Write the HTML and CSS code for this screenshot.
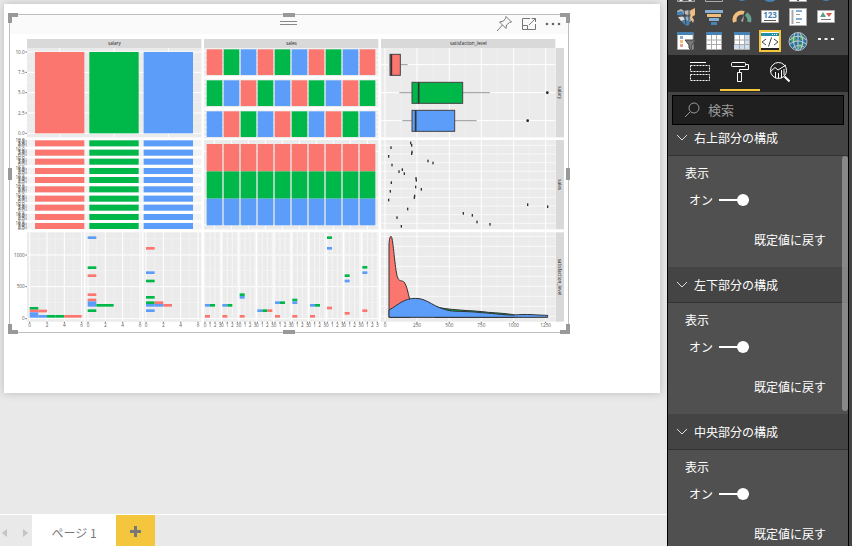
FILE: index.html
```
<!DOCTYPE html>
<html lang="ja">
<head>
<meta charset="utf-8">
<title>レポート</title>
<link rel="stylesheet" href="styles.css">
</head>
<body>
<main class="stage">
  <div class="canvas">
    <section class="page">
      <div class="visual">
        <header class="visual-header">
          <span class="grip"></span>
          <button class="icon-btn" aria-label="ピン留め"><svg width="17" height="17" viewBox="0 0 17 17"><path d="M10 1.500L15.500 7L13.500 7.500L10.500 10L10 13.500L3.500 7L7.500 6L9.500 3.500Z M6.500 10L1 16"/></svg></button>
          <button class="icon-btn" aria-label="フォーカス モード"><svg width="16" height="14" viewBox="0 0 16 14"><path d="M9 1.500H1.500V12.500H14.500V7M1.500 8.500H6.500V12.500M8 8L14.500 1.500M10.500 1.500H14.500V5"/></svg></button>
          <button class="icon-btn" aria-label="その他のオプション"><svg class="dots" width="17" height="4" viewBox="0 0 17 4"><circle cx="2" cy="2" r="1.300"/><circle cx="8" cy="2" r="1.300"/><circle cx="14" cy="2" r="1.300"/></svg></button>
        </header>
        <svg class="chart" id="chart" viewBox="30 102 1674 894" role="img" aria-label="salary sales satisfaction_level"></svg>
        <span class="handle corner tl"></span><span class="handle corner tr"></span>
        <span class="handle corner bl"></span><span class="handle corner br"></span>
        <span class="handle wide top"></span><span class="handle wide bottom"></span>
        <span class="handle tall left"></span><span class="handle tall right"></span>
      </div>
    </section>
  </div>
  <nav class="tabs">
    <button class="arrow" aria-label="前のページ"><svg width="6" height="10" viewBox="0 0 6 10"><path d="M5 1V9L0 5Z"/></svg></button>
    <button class="arrow" aria-label="次のページ"><svg width="6" height="10" viewBox="0 0 6 10"><path d="M1 1V9L6 5Z"/></svg></button>
    <button class="tab">ページ 1</button>
    <button class="add" aria-label="新しいページ"><svg width="11" height="11" viewBox="0 0 11 11"><path d="M4 0H7V4H11V7H7V11H4V7H0V4H4Z"/></svg></button>
  </nav>
</main>
<aside class="pane">
  <div class="gallery-clip">
  <div class="gallery">
    <button aria-label="積み上げ"><svg viewBox="0 0 20 20"><path d="M1.500 1H18.500V18.500H1.500Z" fill="#555" stroke="#aaa"/><path d="M5 18V14M14 18V14" stroke="#eee" stroke-width="3"/></svg></button>
    <button aria-label="滝"><svg viewBox="0 0 20 20"><path d="M1.500 1H18.500V18.500H1.500Z" fill="#444" stroke="#aaa"/></svg></button>
    <button aria-label="円"><svg viewBox="0 0 20 20"><circle cx="10" cy="12" r="6" fill="#4682b4"/></svg></button>
    <button aria-label="ドーナツ"><svg viewBox="0 0 20 20"><circle cx="10" cy="10" r="9" fill="#4682b4"/></svg></button>
    <button aria-label="ツリーマップ"><svg viewBox="0 0 20 20"><path d="M1.500 1H18.500V18.500H1.500Z" fill="#fff" stroke="#aaa"/><path d="M10 1V18" stroke="#555" stroke-width="2"/></svg></button>
    <button aria-label="マップ"><svg viewBox="0 0 20 20"><circle cx="10" cy="11" r="7" fill="#4682b4"/></svg></button>

    <button aria-label="塗り分け地図"><svg viewBox="0 0 20 20"><path d="M1 4L5 2L8 4L13 3L16 4V7L12 8L8 7L2 8Z" fill="#bbb"/><path d="M1 5L6 4L8 8L4 9L1 8Z" fill="#4682b4"/><path d="M2 10L7 9L9 13L5 14Z" fill="#ddd"/><path d="M8 9L13 8L17 12L14 15L9 13Z" fill="#87aed0"/><path d="M5 14L10 13L14 16L12 19L8 17Z" fill="#4682b4"/><path d="M15 3L19 1V8L16 10L18 13L17 16L14 11Z" fill="#f0bd7c"/><path d="M1 9H14M8 4L10 17M13 3V14" stroke="#444" fill="none"/></svg></button>
    <button aria-label="じょうご"><svg viewBox="0 0 20 20"><path d="M1 3H19V6H1Z M5 11H15V14H5Z" fill="#87aed0"/><path d="M3 7H17V10H3Z" fill="#f0bd7c"/><path d="M7 15H13V18H7Z" fill="#4682b4"/></svg></button>
    <button aria-label="ゲージ"><svg viewBox="0 0 20 20"><path d="M3 15A7 7 0 0 1 12 6" fill="none" stroke="#f0bd7c" stroke-width="4"/><path d="M14 7A7 7 0 0 1 17 15" fill="none" stroke="#67a28f" stroke-width="4"/><path d="M12 8L11 15L9 14Z" fill="#aaa"/></svg></button>
    <button aria-label="カード"><svg viewBox="0 0 20 20"><path d="M1.500 3.500H18.500V15.500H1.500Z" fill="#fff" stroke="#aaa"/><text x="10" y="11" text-anchor="middle" class="num">123</text><path d="M4 13.500H16" stroke="#555"/></svg></button>
    <button aria-label="複数行カード"><svg viewBox="0 0 20 20"><path d="M1.500 1.500H18.500V18.500H1.500Z" fill="#fff" stroke="#aaa"/><path d="M4.500 3V17" stroke="#aaa" stroke-width="2"/><path d="M8 4H14M8 12H14" stroke="#87aed0" stroke-width="2"/><path d="M8 7.500H12M8 15.500H12" stroke="#999"/></svg></button>
    <button aria-label="KPI"><svg viewBox="0 0 20 20"><path d="M1.500 3.500H18.500V15.500H1.500Z" fill="#fff" stroke="#aaa"/><path d="M4 10L7 5L10 10Z" fill="#5b9d87"/><path d="M10 6H16L13 10Z" fill="#d65f43"/><path d="M5 12.500H15" stroke="#777"/></svg></button>

    <button aria-label="スライサー"><svg viewBox="0 0 20 20"><path d="M1.500 1.500H17V18.500H1.500Z" fill="#fff" stroke="#aaa"/><path d="M1 1H17V4H1Z" fill="#4682b4"/><path d="M4 5H7V8H4Z" fill="#87aed0"/><path d="M4 9H7V12H4Z" fill="#f0bd7c"/><path d="M4 13H7V16H4Z" fill="#e9a18f"/><path d="M9 9H20L16 14V20L13 17V14Z" fill="#777" stroke="#444"/></svg></button>
    <button aria-label="テーブル"><svg viewBox="0 0 20 20"><path d="M2.500 1.500H17.500V18.500H2.500Z" fill="#fff" stroke="#aaa"/><path d="M2 1H18V4H2Z" fill="#4682b4"/><path d="M7.500 4V18M12.500 4V18M2 9H18M2 13.500H18" stroke="#aaa"/></svg></button>
    <button aria-label="マトリックス"><svg viewBox="0 0 20 20"><path d="M2.500 1.500H17.500V18.500H2.500Z" fill="#fff" stroke="#aaa"/><path d="M13 4H17V18H2V14H13Z" fill="#cfdff0"/><path d="M2 1H18V4H2Z" fill="#4682b4"/><path d="M7.500 4V18M12.500 4V18M2 9H18M2 13.500H18" stroke="#aaa"/></svg></button>
    <button class="selected" aria-label="R スクリプト ビジュアル"><svg viewBox="0 0 20 20"><path d="M0 0H20V20H0Z" fill="#fff"/><path d="M1 2H19V5H1Z" fill="#258ea8"/><path d="M12 3.500H18" stroke="#fff" stroke-dasharray="1 1"/><path d="M6 8L2 11L6 14M14 8L18 11L14 14M11.500 6.500L8.500 15.500" fill="none" stroke="#444"/><path d="M1 17H19V19H1Z" fill="#222"/></svg></button>
    <button aria-label="ArcGIS マップ"><svg viewBox="0 0 20 20"><circle cx="10" cy="10.500" r="9" fill="#2674a5" stroke="#bbb"/><path d="M3 6L7 5L9 10L6 12L3 10Z M12 3L16 6L15 10L12 8Z M11 13L16 12L14 17L10 18Z" fill="#4aa663"/><path d="M2 9C7 4 13 4 18 9M2 13C7 9 13 9 18 13M5 17C8 14 12 14 16 16M7 2C4 9 6 16 9 19M12 2C17 9 14 16 12 19M10 2V19" fill="none" stroke="#ccc"/></svg></button>
    <button aria-label="その他"><svg viewBox="0 0 20 20"><path d="M2 7H5V9H2Z M8.500 7H11.500V9H8.500Z M15 7H18V9H15Z" fill="#eee"/></svg></button>
  </div>
  </div>
  <nav class="modes">
    <button aria-label="フィールド"><svg viewBox="0 0 20 20"><path d="M0 .5H16"/><path d="M.5 3.500H19.500V9.500H.5Z M.5 12.500H19.500V18.500H.5Z" stroke-dasharray="2 1"/></svg></button>
    <button class="active" aria-label="書式"><svg viewBox="0 0 20 20"><rect x="1.500" y=".5" width="14" height="4" rx="1"/><path d="M16 2.500H18.500V7.500H9.500V10M7.500 10.500H11.500V19.500H7.500Z"/></svg></button>
    <button aria-label="分析"><svg viewBox="0 0 20 20"><circle cx="8.500" cy="8.500" r="8"/><path d="M0 10L5 5.500L8 8L16 3M5.500 16V10M8.500 16V11M11.500 16V8M14 13V7"/><path d="M14.500 14.500L19.500 19.500" stroke-width="2"/></svg></button>
  </nav>
  <div class="search-area">
    <label class="search">
      <svg width="16" height="16" viewBox="0 0 16 16"><circle cx="10" cy="6" r="5"/><path d="M6 10L1 15"/></svg>
      <input type="search" placeholder="検索" aria-label="検索">
    </label>
  </div>
  <div class="list">
    <div class="sections">
      <section>
        <button class="heading"><svg width="12" height="8" viewBox="0 0 12 8"><path d="M1 1L6 6L11 1"/></svg>右上部分の構成</button>
        <div class="body"><label for="s1">表示</label><div class="switch"><span>オン</span><input id="s1" type="checkbox" checked></div><button class="reset">既定値に戻す</button></div>
      </section>
      <section>
        <button class="heading"><svg width="12" height="8" viewBox="0 0 12 8"><path d="M1 1L6 6L11 1"/></svg>左下部分の構成</button>
        <div class="body"><label for="s2">表示</label><div class="switch"><span>オン</span><input id="s2" type="checkbox" checked></div><button class="reset">既定値に戻す</button></div>
      </section>
      <section>
        <button class="heading"><svg width="12" height="8" viewBox="0 0 12 8"><path d="M1 1L6 6L11 1"/></svg>中央部分の構成</button>
        <div class="body"><label for="s3">表示</label><div class="switch"><span>オン</span><input id="s3" type="checkbox" checked></div><button class="reset">既定値に戻す</button></div>
      </section>
    </div>
    <span class="scrollbar"></span>
  </div>
</aside>
<script src="chart.js"></script>
</body>
</html>
```
FILE: styles.css
```
* { box-sizing: border-box; }
body {
  margin: 0;
  display: flex;
  height: 100vh;
  overflow: hidden;
  background: #444;
  font: 12px/18px "Noto Sans CJK JP", sans-serif;
}
button {
  margin: 0;
  padding: 0;
  border: 0;
  background: none;
  color: inherit;
  font: inherit;
}
svg { display: block; }

.stage {
  flex: 1;
  min-width: 0;
  display: flex;
  flex-direction: column;
  background: #e9e9e9;
}
.canvas {
  flex: 1;
  display: flex;
  padding: 4px 7px 121px 4px;
}
.page {
  flex: 1;
  padding: 10px 91px 0 5px;
  background: #fff;
  box-shadow: 0 0 8px #bbb;
}
.visual {
  position: relative;
  border: 1px solid #bfbfbf;
}
.visual-header {
  position: relative;
  display: flex;
  align-items: center;
  justify-content: flex-end;
  gap: 8px;
  height: 19px;
  padding: 0 6px 2px 0;
  background: #fafafa;
}
.icon-btn svg {
  fill: none;
  stroke: #777;
}
.icon-btn .dots {
  fill: #666;
  stroke: none;
}
.grip {
  position: absolute;
  left: 50%;
  top: 6px;
  width: 17px;
  height: 4px;
  margin-left: -9px;
  border: solid #888;
  border-width: 1px 0;
}
.chart {
  width: 100%;
  height: auto;
  font-family: "Open Sans", sans-serif;
  font-size: 14px;
}
.handle {
  position: absolute;
  border: 0 solid #999;
}
.corner { width: 10px; height: 10px; }
.tl { left: -2px; top: -2px; border-width: 4px 0 0 4px; }
.tr { right: -2px; top: -2px; border-width: 4px 4px 0 0; }
.bl { left: -2px; bottom: -2px; border-width: 0 0 4px 4px; }
.br { right: -2px; bottom: -2px; border-width: 0 4px 4px 0; }
.wide { left: 50%; width: 12px; height: 4px; margin-left: -6px; background: #999; }
.tall { top: 50%; width: 4px; height: 12px; margin-top: -6px; background: #999; }
.top { top: -2px; }
.bottom { bottom: -2px; }
.left { left: -2px; }
.right { right: -2px; }

.tabs {
  display: flex;
  height: 32px;
  border-top: 1px solid #fff;
}
.arrow {
  width: 16px;
  padding-top: 4px;
}
.arrow svg { margin: 0 auto 0 2px; fill: #c4c4c4; }
.arrow + .arrow svg { margin: 0 auto 0 6px; }
.tab {
  width: 84px;
  padding-top: 4px;
  background: #fff;
  color: #777;
}
.add {
  width: 39px;
  padding-top: 2px;
  background: #f4c63d;
}
.add svg { margin: auto; fill: #777; }

.pane {
  width: 182px;
  margin-right: 3px;
  display: flex;
  flex-direction: column;
  border: solid #000;
  border-width: 0 1px;
  background: #444;
  color: #fff;
}
.gallery-clip {
  flex: none;
  overflow: hidden;
}
.gallery {
  display: grid;
  grid-template-columns: repeat(6, 1fr);
  grid-auto-rows: 24px;
  margin-top: -19px;
  padding: 0 8px 2px 4px;
}
.gallery button {
  display: flex;
  align-items: center;
  justify-content: center;
}
.gallery svg { width: 20px; height: 20px; }
.gallery .selected svg {
  width: 22px;
  height: 22px;
  border: 1px solid #f4c63d;
  outline: 1px solid #f4c63d;
  outline-offset: -2px;
}
.num {
  font: bold 8px "Open Sans", sans-serif;
  fill: #4682b4;
}
.modes {
  display: flex;
  flex: none;
  height: 36px;
  padding-left: 12px;
  background: #222;
}
.modes button {
  width: 40px;
  border-bottom: 2px solid transparent;
}
.modes .active { border-color: #f4c63d; }
.modes svg {
  width: 20px;
  height: 20px;
  margin: auto;
  fill: none;
  stroke: #fff;
}
.search-area {
  flex: none;
  padding: 3px 4px 1px;
  border-top: 1px solid #222;
}
.search {
  display: flex;
  align-items: center;
  gap: 8px;
  height: 30px;
  padding: 0 11px;
  border: 1px solid #000;
  background: #1f1f1f;
}
.search svg { flex: none; fill: none; stroke: #999; }
.search input {
  flex: 1;
  min-width: 0;
  padding: 0;
  border: 0;
  outline: 0;
  background: none;
  color: #fff;
  font: inherit;
  font-size: 13px;
}
.search input::placeholder { color: #999; }
.list {
  position: relative;
  flex: 1;
  min-height: 0;
  overflow: hidden;
}
.sections { margin-top: -6px; }
.heading {
  display: flex;
  align-items: center;
  gap: 6px;
  width: 100%;
  height: 36px;
  padding-left: 8px;
  border-bottom: 1px solid #333;
}
.heading svg { fill: none; stroke: #ddd; }
.body {
  display: flex;
  flex-direction: column;
  padding: 8px 22px 18px 17px;
  background: #505050;
}
.switch {
  display: flex;
  align-items: center;
  gap: 6px;
  margin: 9px 0 22px 4px;
}
.switch input {
  appearance: none;
  display: flex;
  justify-content: flex-end;
  width: 30px;
  height: 12px;
  margin: 0;
  background: linear-gradient(#fff, #fff) center / 100% 2px no-repeat;
}
.switch input::before {
  content: "";
  width: 12px;
  height: 12px;
  border-radius: 50%;
  background: #fff;
}
.reset { align-self: flex-end; }
.scrollbar {
  position: absolute;
  right: 0;
  top: 30px;
  width: 6px;
  height: 255px;
  border-radius: 3px;
  background: rgba(160, 160, 160, .7);
}
```
FILE: chart.js
```
// Pairs plot: three variables against each other, in units of a third of a pixel.
const R = '#fb766e', G = '#00b849', B = '#5b9df8';
const out = [];
const rect = (x, y, w, h, fill, extra = '') => out.push(`<rect x="${x}" y="${y}" width="${w}" height="${h}" fill="${fill}" ${extra}/>`);
const line = (x1, y1, x2, y2, color = '#fff', w = 3) => out.push(`<path d="M${x1} ${y1}L${x2} ${y2}" stroke="${color}" stroke-width="${w}" fill="none"/>`);
const text = (x, y, s, anchor = 'middle', fill = '#555', extra = '') => out.push(`<text x="${x}" y="${y}" text-anchor="${anchor}" fill="${fill}" ${extra}>${s}</text>`);

// Strips and panel backgrounds
const cols = [81, 612, 1143], rows = [144, 420, 697];
['salary', 'sales', 'satisfaction_level'].forEach((name, i) => {
  rect(cols[i], 117, 523, 27, '#d9d9d9');
  text(cols[i] + 262, 135, name, 'middle', '#222');
  rect(1667, rows[i], 25, 268, '#d9d9d9');
  const cy = rows[i] + 134;
  text(1675, cy, name, 'middle', '#222', `transform="rotate(90 1675 ${cy})"`);
  if (i !== 1) rect(81, rows[i], 523, 268, '#ebebeb');
  if (i) rect(612, rows[i], 523, 268, '#ebebeb');
  rect(1143, rows[i], 523, 268, '#ebebeb');
});

// salary / salary
['10.0', '7.5', '5.0', '2.5', '0.0'].forEach((s, i) => {
  const y = 156 + i * 61;
  line(76, y, 604, y);
  line(76, y, 81, y, '#777');
  if (i < 4) line(81, y + 30, 604, y + 30, '#f5f5f5', 2);
  text(74, y + 5, s, 'end');
});
[R, G, B].forEach((c, i) => {
  line(179 + i * 163, 144, 179 + i * 163, 412);
  rect(105 + i * 163, 156, 148, 244, c);
});

// salary / sales
for (let r = 0; r < 3; r++) {
  const y = 145 + r * 93;
  rect(612, y, 523, 84, '#ebebeb');
  for (let k = 0; k < 6; k++) line(612, y + 8 + k * 14, 1135, y + 8 + k * 14, '#f8f8f8', 4);
  for (let k = 0; k < 10; k++) rect(620 + k * 51, y + 3, 47, 77, [R, G, B][(k + r) % 3]);
}
rect(612, 229, 523, 9, '#fff');
rect(612, 322, 523, 9, '#fff');

// Grid of the third column
for (let k = 0; k < 6; k++) {
  const x = 1155 + Math.round(k * 96.4);
  rows.forEach(y => {
    line(x, y, x, y + 268);
    if (k < 5) line(x + 48, y, x + 48, y + 268, '#f3f3f3', 2);
  });
  text(x, 981, k * 250);
  line(x, 965, x, 969, '#777');
}
for (let k = 0; k < 10; k++) line(1143, 436 + k * 26, 1666, 436 + k * 26, '#fff', 2);
for (let k = 0; k < 9; k++) line(1143, 709 + k * 30, 1666, 709 + k * 30, '#fff', 2);

// Box plots
[[1168, 1170, 1201, 1174, 1223, 0, R], [1198, 1236, 1388, 1256, 1470, 1642, G], [1207, 1236, 1364, 1247, 1430, 1583, B]]
.forEach(([lo, q1, q3, med, hi, dot, c], i) => {
  const y = 194 + i * 84;
  line(1143, y, 1666, y);
  line(lo, y, hi, y, '#666', 2);
  rect(q1, y - 31, q3 - q1, 63, c, 'stroke="#444" stroke-width="3"');
  line(med, y - 31, med, y + 32, '#333', 5);
  if (dot) out.push(`<circle cx="${dot}" cy="${y}" r="4" fill="#222"/>`);
});

// sales / salary
for (let k = 0; k < 10; k++) {
  const y = 421 + Math.round(k * 27.6);
  rect(81, y - 1, 523, 20, '#f3f3f3');
  ['10.0', '7.5', '5.0', '2.5', '0.0'].forEach((s, i) => {
    text(74, y + 5 + i * 4, s, 'end', '#555');
    line(76, y + 1 + i * 4, 81, y + 1 + i * 4, '#888', 2);
  });
  [R, G, B].forEach((c, i) => rect(105 + i * 163, y, 148, 18, c));
}

// sales / sales
[454, 514, 594, 675].forEach(y => line(612, y, 1135, y));
for (let k = 0; k < 10; k++) {
  line(643 + k * 51, 420, 643 + k * 51, 688);
  [R, G, B].forEach((c, i) => rect(620 + k * 51, 432 + i * 82, 47, i < 2 ? 82 : 80, c));
}

// sales / satisfaction_level
[[48,53],[41,79],[51,105],[107,39],[110,46],[111,66],[110,71],[159,93],[174,99],[82,119],[72,125],[88,131],[123,145],[124,151],[49,158],[122,171],[139,178],[46,184],[119,198],[118,203],[41,210],[458,224],[518,230],[98,237],[265,250],[292,256],[66,263],[306,276],[345,283],[79,289]]
.forEach(([x, y]) => rect(1123 + x, 386 + y, 4, 8, '#333'));

// satisfaction_level rows: grid and y axis
[[1000, 765], [500, 860], [0, 956]].forEach(([s, y]) => {
  [81, 612].forEach(x => { line(x, y, x + 523, y); line(x, y - 48, x + 523, y - 48, '#f4f4f4', 2); });
  line(76, y, 81, y, '#777');
  text(74, y + 5, s, 'end');
});

// satisfaction_level / salary
for (let f = 0; f < 3; f++) {
  const x0 = 89 + Math.round(f * 174.500);
  if (f) line(x0 - 10, 697, x0 - 10, 965, '#fff', 5);
  for (let k = 0; k < 7; k++) line(x0 + k * 26, 697, x0 + k * 26, 965, k % 2 ? '#f4f4f4' : '#fff', k % 2 ? 2 : 3);
  for (let k = 0; k < 4; k++) {
    line(x0 + k * 52, 965, x0 + k * 52, 969, '#777');
    text(x0 + k * 52, 981, k * 2);
  }
}
const run = (x, y, step, colors) => [...colors].forEach((c, i) => rect(x + i * step, y + 386, step, 8, { R, G, B }[c]));
[[89,535,'G'],[89,543,'RR'],[89,551,'B'],[89,559,'BBGGRR'],
 [263,323,'B'],[263,413,'G'],[263,437,'R'],[263,494,'R'],[263,510,'R'],[263,518,'B'],[263,526,'BGG'],[263,542,'G'],
 [438,355,'R'],[438,428,'B'],[438,453,'G'],[438,502,'G'],[438,518,'GR'],[438,526,'BBR'],[438,542,'B']]
.forEach(([x, y, c]) => run(x, y, 26, c));

// satisfaction_level / sales
for (let f = 0; f < 10; f++) {
  const x0 = 615 + Math.round(f * 52.400);
  if (f) line(x0 - 3, 697, x0 - 3, 965, '#fff', 4);
  for (let k = 0; k < 4; k++) {
    const x = x0 + k * 15;
    line(x, 697, x, 965, '#f6f6f6', 3);
    line(x, 965, x, 969, '#777');
    text(x, 981, k);
  }
}
[[15,526,'BG'],[15,559,'R'],[67,526,'BG'],[67,559,'R'],[119,494,'G'],[119,502,'B'],[119,559,'R'],[172,542,'BGR'],[225,518,'BG'],[225,559,'R'],[277,510,'G'],[277,518,'B'],[277,559,'R'],[330,526,'BG'],[330,559,'R'],[381,323,'G'],[381,355,'B'],[381,534,'R'],[434,437,'G'],[434,453,'B'],[434,550,'R'],[487,412,'G'],[487,428,'B'],[487,542,'R']]
.forEach(([x, y, c]) => run(600 + x, y, 15, c));

// satisfaction_level density
out.push(`<g transform="translate(1125 390)" stroke="#333" stroke-width="3">
<path fill="${R}" d="M42 562V345C43 325 45 319 48 319C54 319 58 400 66 437C72 459 80 448 88 457C96 468 99 490 104 507L104 562Z"/>
<path fill="${G}" d="M180 562V529C210 541 300 541 340 547C370 549 400 551 420 555V562Z"/>
<path fill="${B}" d="M42 562V540C70 525 85 505 122 505C160 505 175 535 230 543C260 545 290 544 320 548C360 550 400 558 430 554C470 552 490 556 518 556V562Z"/></g>`);

document.getElementById('chart').innerHTML = out.join('');
```
